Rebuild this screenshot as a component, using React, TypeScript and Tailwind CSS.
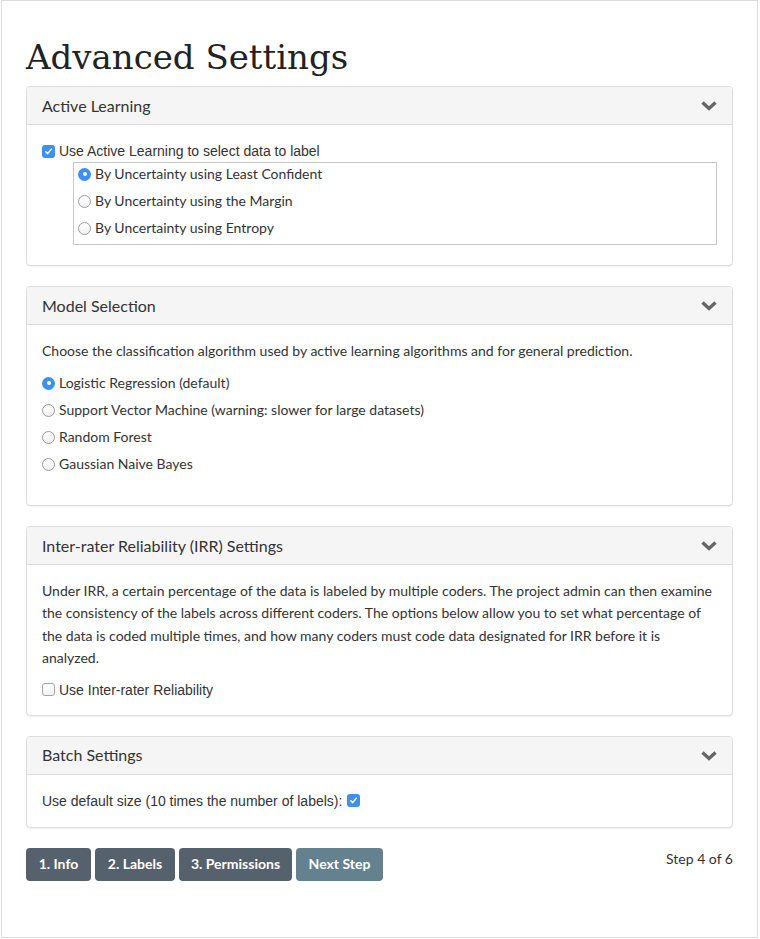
import React from "react";

const sans = "font-['Liberation_Sans',Arial,sans-serif]";

function Chevron() {
  return (
    <svg width="16" height="11" viewBox="0 0 16 11" className="block">
      <path d="M1.5 2.5 L8 8.5 L14.5 2.5" fill="none" stroke="#666" strokeWidth="3.4" strokeLinecap="butt" strokeLinejoin="miter" />
    </svg>
  );
}

function CheckBox({ checked }: { checked: boolean }) {
  if (checked) {
    return (
      <span className="inline-flex w-[13px] h-[13px] rounded-[3px] bg-[#3d8ff0] items-center justify-center shrink-0">
        <svg width="9" height="9" viewBox="0 0 9 9">
          <path d="M1.8 4.8 L3.7 6.6 L7.3 2.2" fill="none" stroke="white" strokeWidth="1.5" strokeLinecap="round" strokeLinejoin="round" />
        </svg>
      </span>
    );
  }
  return (
    <span className="inline-block w-[13px] h-[13px] rounded-[3px] border border-[#a3a3a3] bg-gradient-to-b from-white to-[#f2f2f2] shrink-0" />
  );
}

function Radio({ checked }: { checked: boolean }) {
  if (checked) {
    return (
      <span className="inline-flex w-[13px] h-[13px] rounded-full bg-[#3d8ff0] items-center justify-center shrink-0">
        <span className="w-[4px] h-[4px] rounded-full bg-white" />
      </span>
    );
  }
  return (
    <span className="inline-block w-[13px] h-[13px] rounded-full border border-[#9c9c9c] bg-gradient-to-b from-white to-[#f0f0f0] shrink-0" />
  );
}

function Panel({ title, children }: { title: string; children: React.ReactNode }) {
  return (
    <div className="border border-[#dddddd] rounded-[4px] bg-white shadow-[0_1px_1px_rgba(0,0,0,0.05)]">
      <div className="h-[38px] bg-[#f5f5f5] border-b border-[#dddddd] rounded-t-[3px] px-[15px] flex items-center justify-between">
        <span className="text-[16px] text-[#333]">{title}</span>
        <Chevron />
      </div>
      <div className="p-[15px]">{children}</div>
    </div>
  );
}

function RadioRow({ checked, label }: { checked: boolean; label: string }) {
  return (
    <div className="h-[22px] flex items-center">
      <Radio checked={checked} />
      <span className="ml-[4px]">{label}</span>
    </div>
  );
}

export default function App() {
  return (
    <div className="ml-px w-[757px] h-[938px] border border-[#dddddd] px-6 font-['Lato',sans-serif] text-[14px] leading-[22px] text-[#333] bg-white">
      <h1 className="pt-[36px] pb-[9px] text-[34px] leading-[40px] text-[#222] font-['DejaVu_Serif',serif]">
        Advanced Settings
      </h1>
      <div className="flex flex-col gap-[20px]">
        <Panel title="Active Learning">
          <div className={`h-[22px] flex items-center ${sans}`}>
            <CheckBox checked={true} />
            <span className="ml-[4px]">Use Active Learning to select data to label</span>
          </div>
          <div className="ml-[31px] border border-[#c8c8c8] pl-[4px] pt-0 pb-[5px] mb-[5px] flex flex-col gap-[5px]">
            <RadioRow checked={true} label="By Uncertainty using Least Confident" />
            <RadioRow checked={false} label="By Uncertainty using the Margin" />
            <RadioRow checked={false} label="By Uncertainty using Entropy" />
          </div>
        </Panel>
        <Panel title="Model Selection">
          <p className="mb-[10px]">
            Choose the classification algorithm used by active learning algorithms and for general prediction.
          </p>
          <div className="flex flex-col gap-[5px] mb-[15px]">
            <RadioRow checked={true} label="Logistic Regression (default)" />
            <RadioRow checked={false} label="Support Vector Machine (warning: slower for large datasets)" />
            <RadioRow checked={false} label="Random Forest" />
            <RadioRow checked={false} label="Gaussian Naive Bayes" />
          </div>
        </Panel>
        <Panel title="Inter-rater Reliability (IRR) Settings">
          <p className="mb-[10px] leading-[22.4px]">
            <span className="block whitespace-nowrap">Under IRR, a certain percentage of the data is labeled by multiple coders. The project admin can then examine</span>
            <span className="block whitespace-nowrap">the consistency of the labels across different coders. The options below allow you to set what percentage of</span>
            <span className="block whitespace-nowrap">the data is coded multiple times, and how many coders must code data designated for IRR before it is</span>
            <span className="block whitespace-nowrap">analyzed.</span>
          </p>
          <div className={`h-[20px] flex items-center ${sans}`}>
            <CheckBox checked={false} />
            <span className="ml-[4px]">Use Inter-rater Reliability</span>
          </div>
        </Panel>
        <Panel title="Batch Settings">
          <div className={`h-[22px] flex items-center ${sans}`}>
            <span>Use default size (10 times the number of labels):</span>
            <span className="ml-[5px] inline-flex">
              <CheckBox checked={true} />
            </span>
          </div>
        </Panel>
      </div>
      <div className="mt-[20px] flex justify-between items-start">
        <div className="flex gap-[4px]">
          <button className="w-[65px] h-[33px] rounded-[4px] bg-[#56616e] text-white font-bold text-[14px]">1. Info</button>
          <button className="w-[80px] h-[33px] rounded-[4px] bg-[#56616e] text-white font-bold text-[14px]">2. Labels</button>
          <button className="w-[113px] h-[33px] rounded-[4px] bg-[#56616e] text-white font-bold text-[14px]">3. Permissions</button>
          <button className="w-[87px] h-[33px] rounded-[4px] bg-[#648190] text-white font-bold text-[14px]">Next Step</button>
        </div>
        <div className="leading-[22px]">Step 4 of 6</div>
      </div>
    </div>
  );
}
